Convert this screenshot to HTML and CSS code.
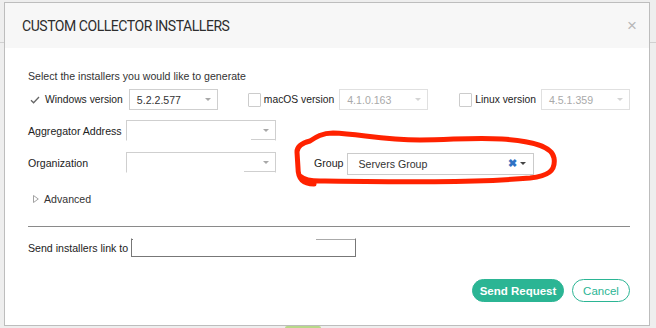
FILE: index.html
```html
<!DOCTYPE html>
<html>
<head>
<meta charset="utf-8">
<link rel="stylesheet" href="styles.css">
</head>
<body>
<div class="modal">
  <div class="modal-header">
    <h1 class="title">CUSTOM COLLECTOR INSTALLERS</h1>
    <span class="close">×</span>
  </div>
  <div class="modal-body">
    <p class="intro">Select the installers you would like to generate</p>
    <div class="versions">
      <div class="ver ver-win">
        <svg class="check" width="10" height="8" viewBox="0 0 10 8"><path d="M1 4.2 L3.6 6.8 L9 1" fill="none" stroke="#666" stroke-width="1.3"/></svg>
        <span class="ver-label">Windows version</span>
        <div class="select sel-ver"><span>5.2.2.577</span><i class="caret"></i></div>
      </div>
      <div class="ver ver-mac">
        <span class="box"></span>
        <span class="ver-label">macOS version</span>
        <div class="select sel-ver disabled"><span>4.1.0.163</span><i class="caret"></i></div>
      </div>
      <div class="ver ver-linux">
        <span class="box"></span>
        <span class="ver-label">Linux version</span>
        <div class="select sel-ver disabled"><span>4.5.1.359</span><i class="caret"></i></div>
      </div>
    </div>
    <div class="field-row row-agg">
      <span class="field-label">Aggregator Address</span>
      <div class="select sel-wide gap-agg"><span></span><i class="caret"></i></div>
    </div>
    <div class="field-row row-org">
      <span class="field-label">Organization</span>
      <div class="select sel-wide gap-org"><span></span><i class="caret"></i></div>
      <span class="group-label">Group</span>
      <div class="select sel-group"><span>Servers Group</span><b class="clear">✖</b><i class="caret dark"></i></div>
    </div>
    <div class="advanced">
      <svg class="tri" width="6" height="8" viewBox="0 0 6 8"><path d="M0.5 0.5 L5.3 4 L0.5 7.5 Z" fill="none" stroke="#999" stroke-width="0.9"/></svg>
      <span>Advanced</span>
    </div>
    <hr class="sep">
    <div class="send-row">
      <span class="field-label">Send installers link to</span>
      <div class="email-input"></div>
    </div>
    <div class="actions">
      <button class="btn btn-primary">Send Request</button>
      <button class="btn btn-outline">Cancel</button>
    </div>
  </div>
  <svg class="scribble" width="656" height="328" viewBox="0 0 656 328">
    <path d="M314 184 C302 184 298 178 298 168 L297 152 C297 146 302 143 310 141 C316 137 322 133 333 133 C360 134 382 140 420 140 C452 140 472 137 502 139 C532 141 552 146 554 158 C556 171 548 176 530 178 C470 183 400 182 320 181 C311 181 304 180 300 176" fill="none" stroke="#ff2200" stroke-width="5" stroke-linecap="round" stroke-linejoin="round"/>
  </svg>
</div>
<div class="blob"></div>
</body>
</html>
```
FILE: styles.css
```css
html, body {
  margin: 0;
  padding: 0;
}
body {
  width: 656px;
  height: 328px;
  overflow: hidden;
  background: linear-gradient(to bottom, transparent 42px, #d0d0d0 42px, #d0d0d0 43px, transparent 43px), #eeeeee;
  font-family: "Liberation Sans", Arial, sans-serif;
  color: #333;
  padding-top: 2px;
  padding-left: 4px;
  box-sizing: border-box;
}
.modal {
  position: relative;
  width: 646px;
  height: 324px;
  box-sizing: border-box;
  border: 1px solid #bdbdbd;
  background: #fff;
}
.modal-header {
  height: 45px;
  background: #f7f7f7;
  display: flex;
  align-items: center;
  justify-content: space-between;
  padding: 0 12px 0 17px;
}
.title {
  margin: 0;
  font-family: Roboto, "Liberation Sans", sans-serif;
  font-size: 14px;
  letter-spacing: -0.45px;
  font-weight: normal;
  color: #2d2d2d;
  white-space: nowrap;
}
.close {
  font-size: 17px;
  color: #b8b8b8;
  line-height: 1;
}
.modal-body {
  padding: 21px 19px 0 23px;
  font-size: 10.6px;
}
.intro {
  margin: 0;
  line-height: 14px;
  height: 14px;
  white-space: nowrap;
}
.versions {
  display: flex;
  align-items: center;
  margin-top: 6px;
  height: 21px;
}
.ver {
  display: flex;
  align-items: center;
  flex-shrink: 0;
}
.check {
  margin-left: 2px;
  margin-right: 5px;
  flex-shrink: 0;
}
.ver-label {
  font-size: 10.3px;
  color: #222;
  margin-right: 5px;
  white-space: nowrap;
}
.ver-win .ver-label { margin-right: 6px; }
.ver-mac { margin-left: 30px; }
.ver-linux { margin-left: 31px; }
.box {
  width: 11px;
  height: 12px;
  border: 1px solid #ccc;
  border-radius: 1px;
  margin-right: 3px;
  background: #fff;
  flex-shrink: 0;
}
.select {
  position: relative;
  box-sizing: border-box;
  height: 21px;
  border: 1px solid #cfcfcf;
  background: #fff;
  display: flex;
  align-items: center;
  font-size: 10.6px;
  color: #333;
  flex-shrink: 0;
}
.select span {
  padding-left: 7px;
  flex: 1;
  white-space: nowrap;
}
.caret {
  display: block;
  width: 0;
  height: 0;
  border-left: 3px solid transparent;
  border-right: 3px solid transparent;
  border-top: 3px solid #a8a8a8;
  margin-right: 6px;
}
.caret.dark {
  border-top-color: #444;
  margin-right: 7px;
  margin-left: 3px;
}
.sel-ver {
  width: 89px;
}
.disabled {
  border-color: #e0e0e0;
  color: #a9a9a9;
}
.disabled .caret {
  border-top-color: #d4d4d4;
}
.field-row {
  display: flex;
  align-items: center;
}
.row-agg {
  margin-top: 10px;
}
.row-org {
  margin-top: 10px;
  height: 23px;
}
.field-label {
  font-size: 10.6px;
  color: #222;
  width: 98px;
  flex-shrink: 0;
  white-space: nowrap;
}
.sel-wide {
  width: 150px;
}
.gap-agg {
  border-bottom-color: transparent;
  background: linear-gradient(to right, transparent 124px, #cfcfcf 124px) bottom / 100% 1px no-repeat, #fff;
}
.gap-org {
  border-bottom-color: transparent;
  background: linear-gradient(to right, transparent 117px, #cfcfcf 117px) bottom / 100% 1px no-repeat, #fff;
}
.group-label {
  margin-left: 38px;
  margin-right: 4px;
  font-size: 10.6px;
  color: #222;
}
.sel-group {
  width: 187px;
  height: 22px;
  margin-top: 2px;
  font-size: 10.6px;
  border-color: #cbcbcb;
}
.sel-group span {
  padding-left: 10px;
  color: #333;
}
.clear {
  color: #2f72c4;
  font-size: 11px;
  font-weight: bold;
}
.advanced {
  display: flex;
  align-items: center;
  margin-top: 19px;
  margin-left: 5px;
  font-size: 10.6px;
  color: #333;
}
.tri {
  margin-right: 5px;
}
.sep {
  border: 0;
  border-top: 1px solid #8a8a8a;
  margin: 21px 0 0 0;
}
.send-row {
  margin-top: 11px;
  display: flex;
  align-items: center;
}
.send-row .field-label {
  width: auto;
  margin-right: 3px;
}
.email-input {
  width: 225px;
  height: 19px;
  box-sizing: border-box;
  border: 1px solid #777;
  border-top-color: transparent;
  background: linear-gradient(to right, #777 1px, transparent 1px, transparent 184px, #aaa 184px) top / 100% 1px no-repeat, #fff;
}
.actions {
  display: flex;
  justify-content: flex-end;
  gap: 8px;
  margin-top: 22px;
}
.btn {
  font-family: "Liberation Sans", Arial, sans-serif;
  font-size: 11.5px;
  height: 23px;
  border-radius: 12px;
  box-sizing: border-box;
  padding: 0;
}
.btn-primary {
  width: 92px;
  background: #2bb594;
  border: 1px solid #2bb594;
  color: #fff;
  font-weight: bold;
}
.btn-outline {
  width: 58px;
  background: #fff;
  border: 1px solid #2bb594;
  color: #2bb594;
}
.scribble {
  position: absolute;
  left: -5px;
  top: -3px;
  pointer-events: none;
}
.blob {
  width: 36px;
  height: 2px;
  margin-left: 281px;
  background: #b8d88a;
  border-radius: 8px 8px 0 0;
}
```
